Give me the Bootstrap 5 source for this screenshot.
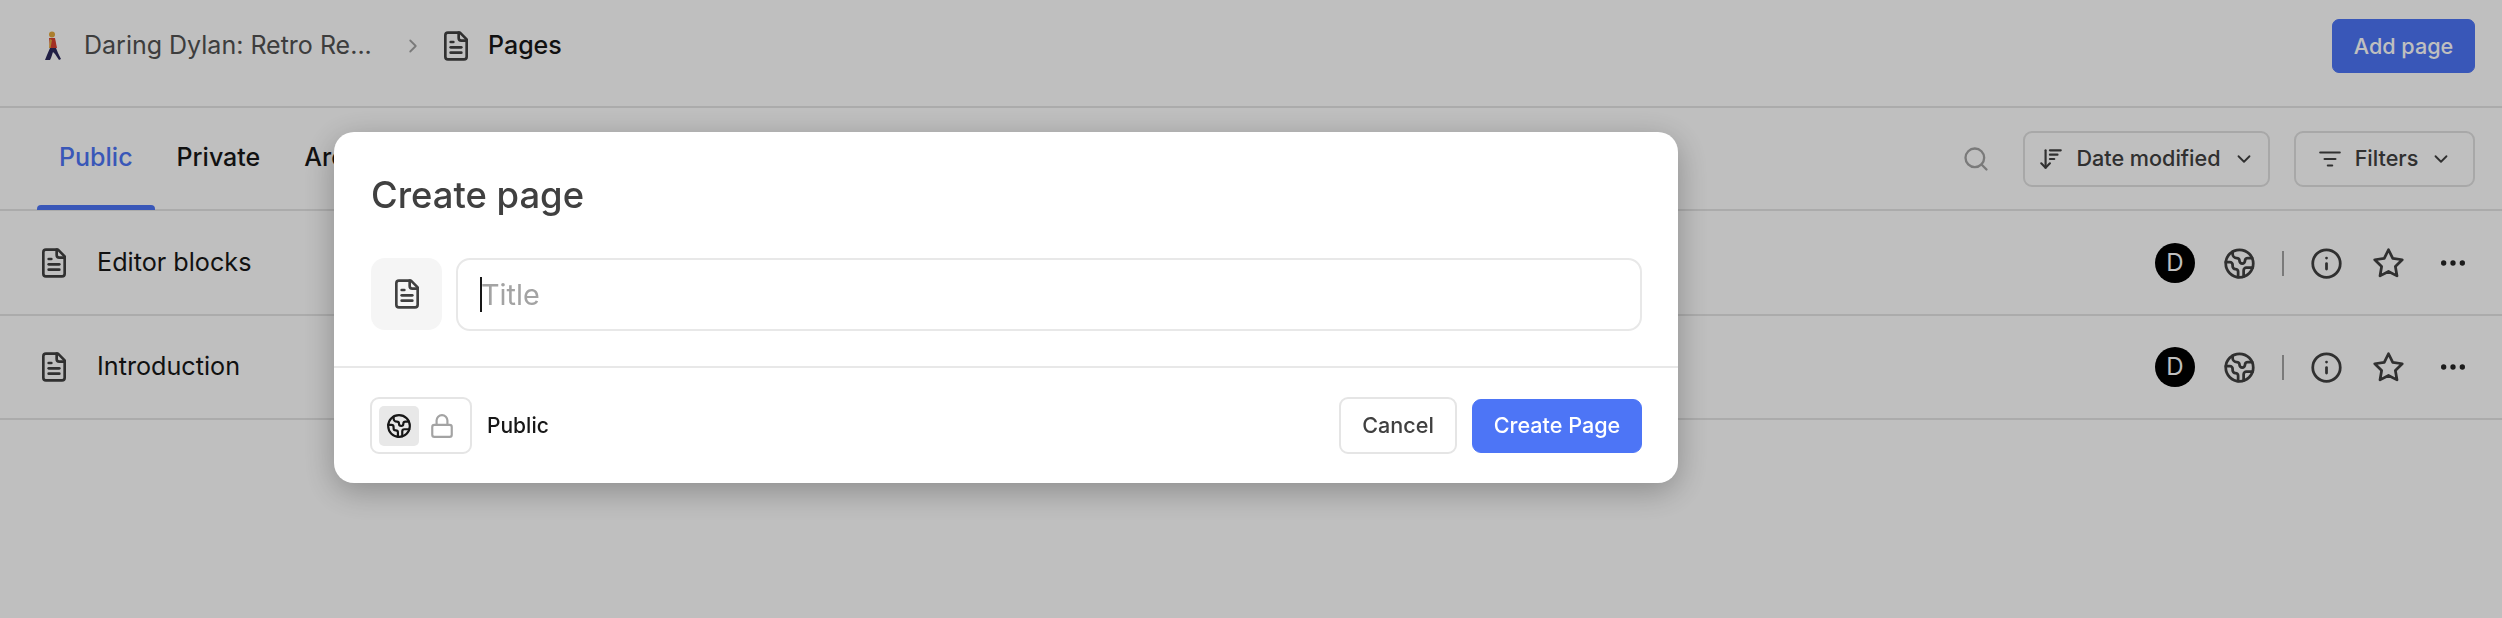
<!doctype html>
<html lang="en"><head><meta charset="utf-8"><title>Create page</title>
<link href="https://cdn.jsdelivr.net/npm/bootstrap@5.3.0/dist/css/bootstrap.min.css" rel="stylesheet">
<style>
html,body{height:100%;overflow:hidden}
body{font-family:Inter,"Liberation Sans",sans-serif;background:#fff;color:#171717}
.ico{fill:none;stroke:currentColor;stroke-width:2;stroke-linecap:round;stroke-linejoin:round;flex:none;display:block}
.top-bar{height:108px;padding:0 27px 14px 37px;border-bottom:2px solid #e5e5e5}
.crumb-emoji{margin-left:6px;margin-right:21px}
.crumb-proj{font-size:25px;color:#525252;width:291px;white-space:nowrap;overflow:hidden}
.crumb-sep{color:#a3a3a3;margin:0 18px 0 27px}
.crumb-doc{color:#404040;margin-right:16px;margin-left:-2px}
.crumb-page{font-size:25px;font-weight:500;color:#171717}
.add-btn{--bs-btn-bg:#4d75f6;--bs-btn-border-color:#4d75f6;--bs-btn-padding-x:0;--bs-btn-font-size:21.6px;--bs-btn-border-radius:7px;width:143px;height:54px;font-weight:500;color:#fff;opacity:1}
.tab-bar{height:103px;padding:0 27px 2px 37px;border-bottom:2px solid #e5e5e5}
.tab-item{padding:0 22px;height:100%;display:flex;align-items:center;font-size:25px;font-weight:500;color:#171717;text-decoration:none;position:relative}
.tab-item.on{color:#4d75f6}
.tab-item.on::after{content:"";position:absolute;left:0;right:0;bottom:-3px;height:5px;background:#4d75f6;border-radius:4px 4px 0 0}
.tool-btn{--bs-btn-border-color:#e0e0e0;--bs-btn-border-width:2px;--bs-btn-border-radius:9px;--bs-btn-font-size:21.6px;--bs-btn-color:#404040;--bs-btn-padding-x:0;--bs-btn-padding-y:0;height:56px;margin-top:2px;font-weight:500;gap:12px;display:flex;align-items:center;justify-content:center}
.sort-btn{width:247px}.filter-btn{width:181px}
.search-ico{color:#a3a3a3;margin-right:33px;margin-top:2px}
.row-list{margin-top:1px}
.page-row{--bs-list-group-border-color:#e5e5e5;--bs-list-group-border-width:2px;height:104px;padding:0 33px 0 38px!important;font-size:25.2px;color:#171717;background:#fff}
.page-row:last-child{border-bottom:2px solid #e5e5e5!important}
.row-doc{color:#404040;margin-right:27px}
.ava{width:40px;height:40px;border-radius:50%;background:#000;color:#fff;font-size:24px;line-height:1;margin-right:28px}
.row-globe{color:#404040;margin-right:26px}
.row-line{width:2px;height:25px;background:#a3a3a3;margin-right:26px}
.row-ico{color:#404040;margin-right:29px}
.dots{color:#262626;margin-left:3px}
.modal-backdrop.show{opacity:.25;background:#000}
.sheet{max-width:1344px;margin:132px 0 0 334px;--bs-modal-width:1344px}
.sheet .modal-content{border:0;border-radius:20px;height:351px;box-shadow:0 8px 32px rgba(0,0,0,.28);display:flex;flex-direction:column}
.sheet-title{font-size:36.4px;font-weight:500;color:#404040;line-height:1;margin:0 0 45px;letter-spacing:0}
.sheet-body{padding:45px 36px 0 37px;height:234px}
.doc-row{gap:14px}
.doc-box{width:71px;height:72px;border-radius:14px;background:#f5f5f5;color:#404040}
.title-input{flex:1;height:73px;border:2px solid #e8e8e8;border-radius:14px;padding:0 22px;font-size:28.8px;color:#a3a3a3;line-height:1;position:relative}
.title-input::before{content:"";display:inline-block;width:2px;height:35px;background:#171717;vertical-align:middle;margin-right:-1px}
.sheet-foot{border-top:2px solid #e8e8e8;padding:0 36px 0 36px;height:117px;flex:1}
.vis{width:102px;height:57px;border:2px solid #e5e5e5;border-radius:9px;padding:0 7px}
.vis-cell{width:40px;height:40px;border-radius:5px}
.vis-cell.on{background:#e8e8e8;color:#171717}
.vis-lock{color:#a3a3a3;margin-left:10px}
.vis-name{font-size:21px;font-weight:500;color:#171717;margin-left:15px}
.cancel-btn{--bs-btn-border-color:#e5e5e5;--bs-btn-border-width:2px;--bs-btn-border-radius:9px;--bs-btn-font-size:21.6px;--bs-btn-color:#404040;--bs-btn-padding-x:0;width:118px;height:57px;font-weight:500}
.create-btn{--bs-btn-bg:#4d75f6;--bs-btn-border-color:#4d75f6;--bs-btn-font-size:21.6px;--bs-btn-border-radius:9px;--bs-btn-padding-x:0;width:170px;height:54px;font-weight:500;margin-left:15px}
</style></head>
<body>
<svg width="0" height="0" class="position-absolute"><defs>
<symbol id="i-doc" viewBox="0 0 24 24"><path d="M15 2H6a2 2 0 0 0-2 2v16a2 2 0 0 0 2 2h12a2 2 0 0 0 2-2V7Z"/><path d="M14 2v4a2 2 0 0 0 2 2h4"/><path d="M10 9H8"/><path d="M16 13H8"/><path d="M16 17H8"/></symbol>
<symbol id="i-globe" viewBox="0 0 24 24"><path d="M21.54 15H17a2 2 0 0 0-2 2v4.54"/><path d="M7 3.34V5a3 3 0 0 0 3 3a2 2 0 0 1 2 2c0 1.1.9 2 2 2a2 2 0 0 0 2-2c0-1.1.9-2 2-2h3.17"/><path d="M11 21.95V18a2 2 0 0 0-2-2a2 2 0 0 1-2-2v-1a2 2 0 0 0-2-2H2.05"/><circle cx="12" cy="12" r="10"/></symbol>
<symbol id="i-info" viewBox="0 0 24 24"><circle cx="12" cy="12" r="10"/><path d="M12 16v-4"/><path d="M12 8h.01"/></symbol>
<symbol id="i-star" viewBox="0 0 24 24"><polygon points="12 2 15.09 8.26 22 9.27 17 14.14 18.18 21.02 12 17.77 5.82 21.02 7 14.14 2 9.27 8.91 8.26 12 2"/></symbol>
<symbol id="i-dots" viewBox="0 0 24 24"><circle cx="12" cy="12" r="1"/><circle cx="19" cy="12" r="1"/><circle cx="5" cy="12" r="1"/></symbol>
<symbol id="i-search" viewBox="0 0 24 24"><circle cx="11" cy="11" r="8"/><path d="m21 21-4.3-4.3"/></symbol>
<symbol id="i-lock" viewBox="0 0 24 24"><rect x="3" y="11" width="18" height="11" rx="2"/><path d="M7 11V7a5 5 0 0 1 10 0v4"/></symbol>
<symbol id="i-sort" viewBox="0 0 24 24"><path d="m3 16 4 4 4-4"/><path d="M7 20V4"/><path d="M11 4h10"/><path d="M11 8h7"/><path d="M11 12h4"/></symbol>
<symbol id="i-filter" viewBox="0 0 24 24"><path d="M3 6h18"/><path d="M7 12h10"/><path d="M10 18h4"/></symbol>
<symbol id="i-down" viewBox="0 0 24 24"><path d="m6 9 6 6 6-6"/></symbol>
<symbol id="i-right" viewBox="0 0 24 24"><path d="m9 18 6-6-6-6"/></symbol>
</defs></svg>

<header class="top-bar d-flex align-items-center">
  <svg class="crumb-emoji flex-none" width="20" height="31" viewBox="0 0 20 31" aria-hidden="true"><circle cx="9" cy="3.5" r="3" fill="#e5a93c"/><path d="M6 7h6l2 10H7z" fill="#d9402f"/><path d="M7 17h6l2 5 3 6-2 1-4-6-2-2-2 6-1 2H2l2-5z" fill="#2d2a5c"/><path d="M7 8l-1 9h1.500l1.500-8z" fill="#e5a93c"/></svg>
  <span class="crumb-proj">Daring Dylan: Retro Re...</span>
  <svg class="ico crumb-sep" width="22" height="22"><use href="#i-right"/></svg>
  <svg class="ico crumb-doc" width="32" height="32"><use href="#i-doc"/></svg>
  <span class="crumb-page">Pages</span>
  <button class="btn btn-primary add-btn ms-auto">Add page</button>
</header>

<nav class="tab-bar d-flex align-items-center">
  <a class="tab-item on" href="#">Public</a>
  <a class="tab-item" href="#">Private</a>
  <a class="tab-item" href="#">Archived</a>
  <svg class="ico search-ico ms-auto" width="28" height="28"><use href="#i-search"/></svg>
  <button class="btn tool-btn sort-btn"><svg class="ico" width="26" height="26"><use href="#i-sort"/></svg>Date modified<svg class="ico" width="22" height="22"><use href="#i-down"/></svg></button>
  <button class="btn tool-btn filter-btn ms-4"><svg class="ico" width="26" height="26"><use href="#i-filter"/></svg>Filters<svg class="ico" width="22" height="22"><use href="#i-down"/></svg></button>
</nav>

<div class="list-group list-group-flush row-list">
  <div class="list-group-item page-row d-flex align-items-center">
    <svg class="ico row-doc" width="32" height="32"><use href="#i-doc"/></svg><span>Editor blocks</span>
    <span class="ava d-flex align-items-center justify-content-center ms-auto">D</span>
    <svg class="ico row-globe" width="33" height="33"><use href="#i-globe"/></svg><span class="row-line"></span>
    <svg class="ico row-ico" width="33" height="33"><use href="#i-info"/></svg><svg class="ico row-ico" width="33" height="33"><use href="#i-star"/></svg>
    <svg class="ico dots" width="32" height="32"><use href="#i-dots"/></svg>
  </div>
  <div class="list-group-item page-row d-flex align-items-center">
    <svg class="ico row-doc" width="32" height="32"><use href="#i-doc"/></svg><span>Introduction</span>
    <span class="ava d-flex align-items-center justify-content-center ms-auto">D</span>
    <svg class="ico row-globe" width="33" height="33"><use href="#i-globe"/></svg><span class="row-line"></span>
    <svg class="ico row-ico" width="33" height="33"><use href="#i-info"/></svg><svg class="ico row-ico" width="33" height="33"><use href="#i-star"/></svg>
    <svg class="ico dots" width="32" height="32"><use href="#i-dots"/></svg>
  </div>
</div>

<div class="modal-backdrop show"></div>
<div class="modal d-block" tabindex="-1" role="dialog">
  <div class="modal-dialog sheet">
    <div class="modal-content">
      <div class="sheet-body">
        <h2 class="sheet-title">Create page</h2>
        <div class="d-flex doc-row align-items-stretch">
          <div class="doc-box d-flex align-items-center justify-content-center"><svg class="ico" width="32" height="32"><use href="#i-doc"/></svg></div>
          <div class="title-input d-flex align-items-center">Title</div>
        </div>
      </div>
      <div class="sheet-foot d-flex align-items-center">
        <div class="vis d-flex align-items-center">
          <span class="vis-cell on d-flex align-items-center justify-content-center"><svg class="ico" width="26" height="26"><use href="#i-globe"/></svg></span>
          <svg class="ico vis-lock" width="26" height="26"><use href="#i-lock"/></svg>
        </div>
        <span class="vis-name">Public</span>
        <button class="btn cancel-btn ms-auto">Cancel</button>
        <button class="btn btn-primary create-btn">Create Page</button>
      </div>
    </div>
  </div>
</div>
<script src="https://cdn.jsdelivr.net/npm/bootstrap@5.3.0/dist/js/bootstrap.bundle.min.js"></script>
</body></html>
